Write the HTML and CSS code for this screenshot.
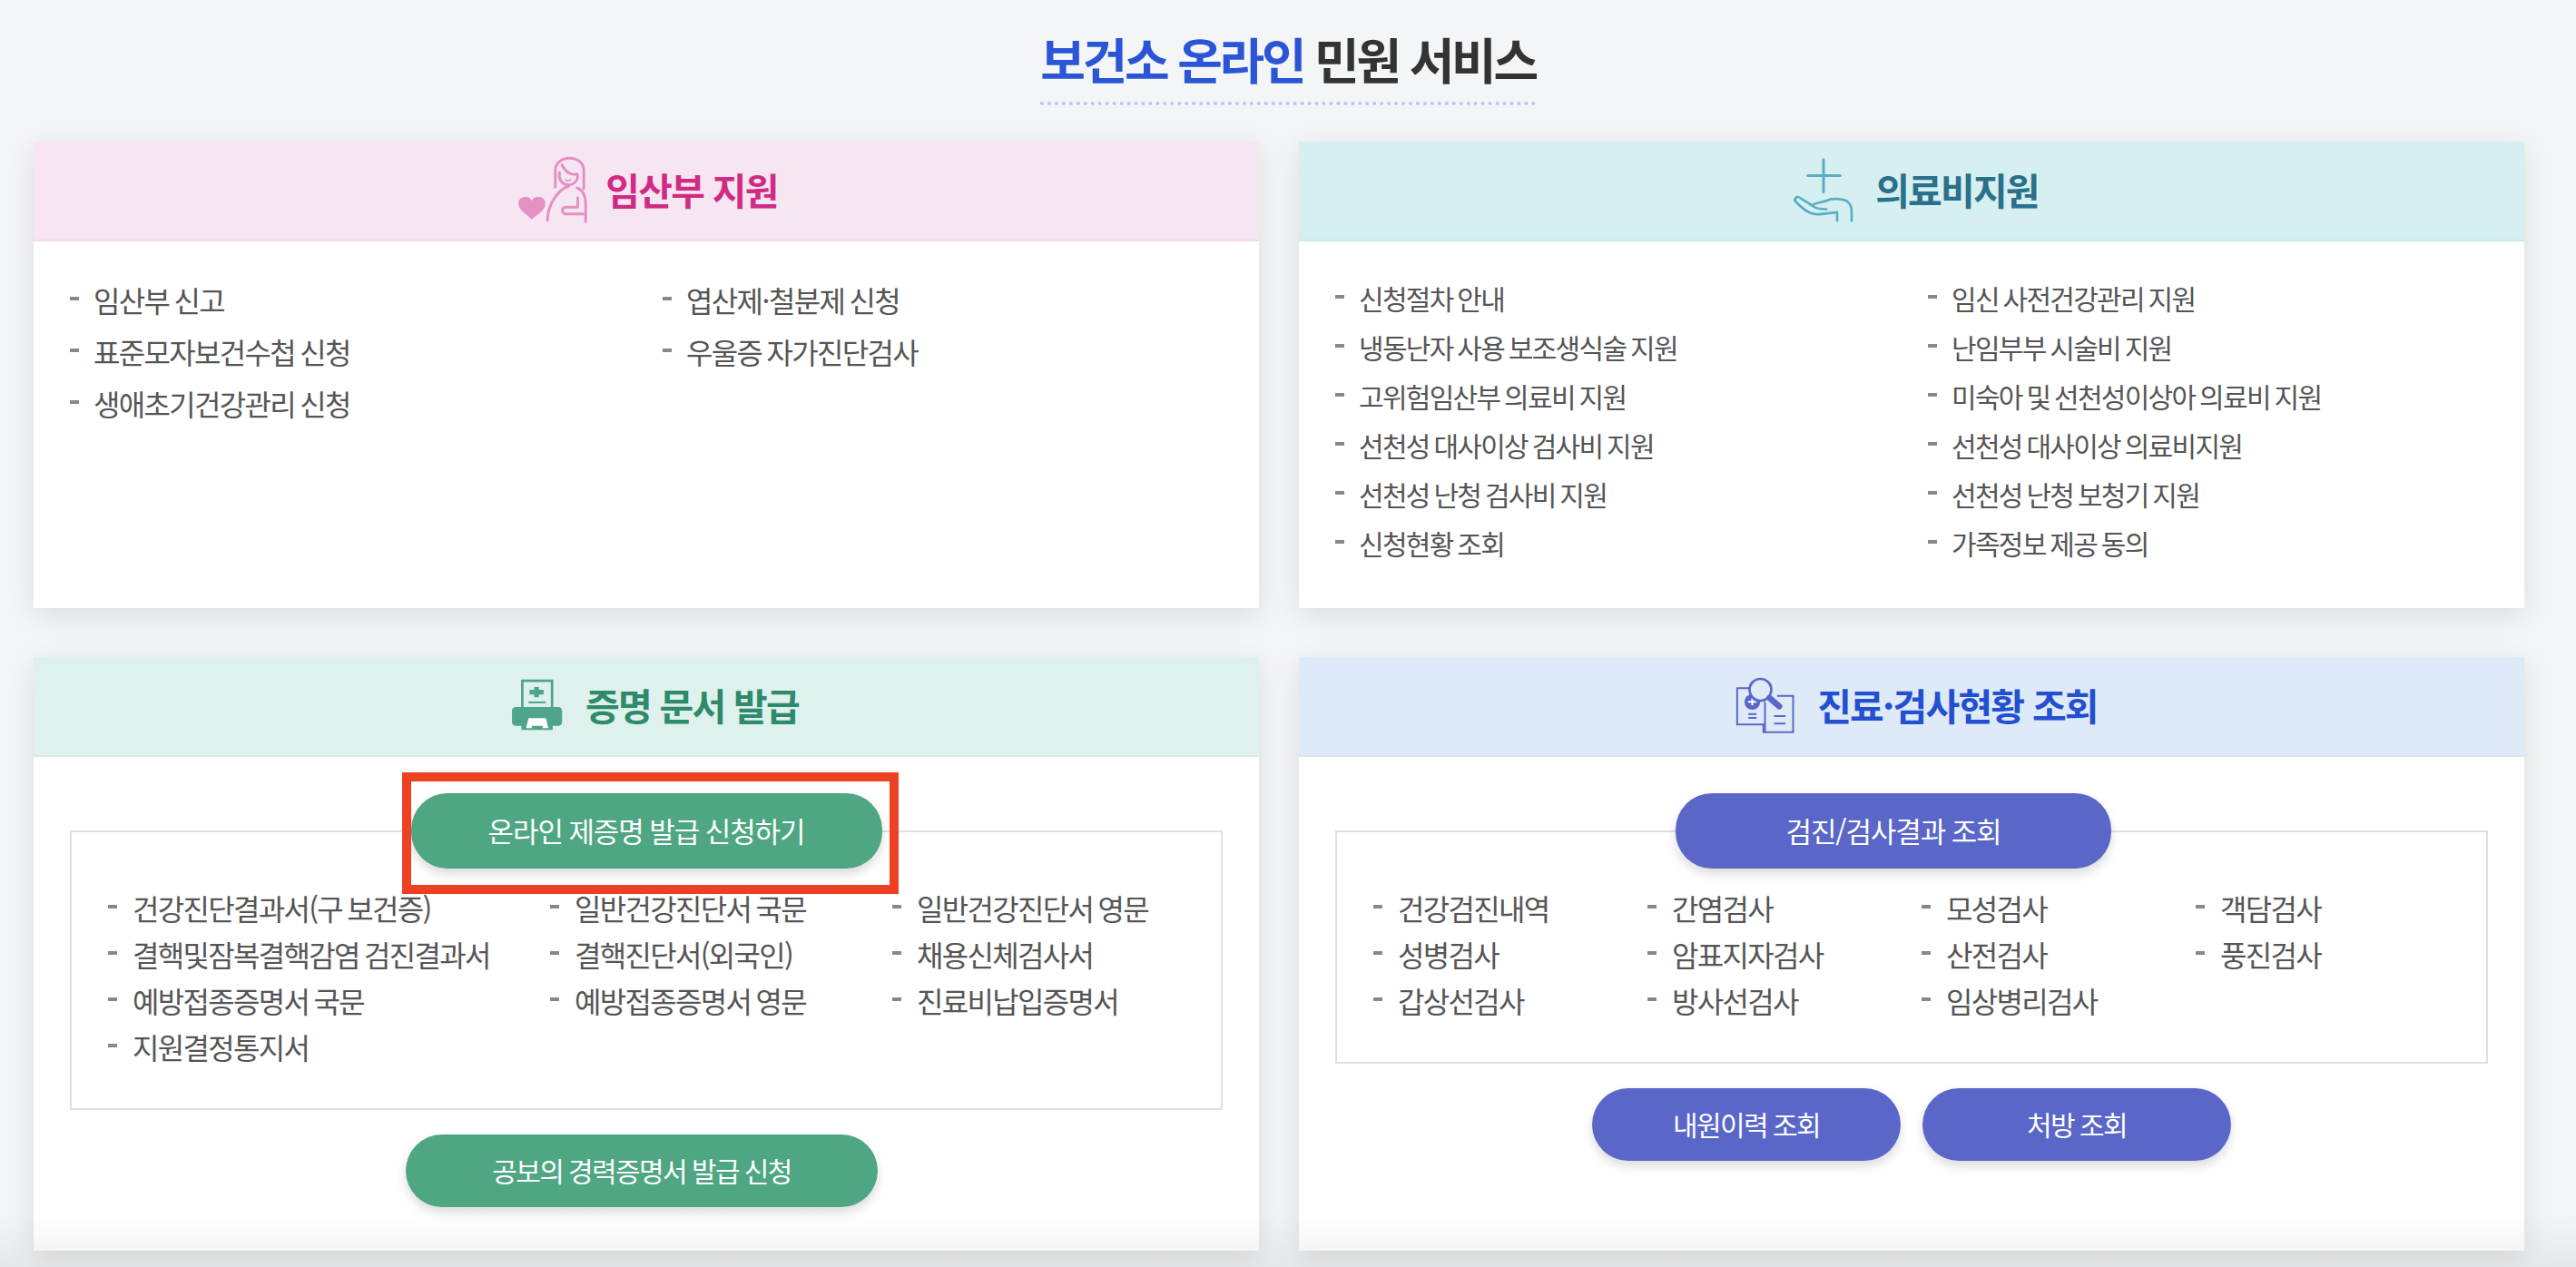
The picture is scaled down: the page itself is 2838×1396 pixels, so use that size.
FILE: index.html
```html
<!DOCTYPE html>
<html lang="ko">
<head>
<meta charset="utf-8">
<title>보건소 온라인 민원 서비스</title>
<link rel="stylesheet" href="styles.css">
</head>
<body>
<header class="page-head">
  <h1 class="page-title"><em>보건소 온라인</em> 민원 서비스</h1>
</header>
<main class="cards">
  <section class="card">
    <h2 class="card-head head-pink">
      <svg class="icon" width="82" height="75" viewBox="90 60 245 225" fill="none" stroke="#e58fc3" stroke-width="9" stroke-linecap="round" stroke-linejoin="round">
        <path d="M218 165V110C218 85 240 70 265 70C290 70 312 85 312 110V170"/>
        <path d="M232 118C228 140 240 158 262 158C285 158 296 135 290 122C270 128 250 115 240 92"/>
        <path d="M192 275C192 225 225 175 262 162M290 168C310 175 318 195 318 225V280"/>
        <path d="M292 200V232H252C238 232 238 254 252 254H310"/>
        <path d="M252 141C256 146 264 146 268 141" stroke-width="5"/>
        <path d="M140 272C115 250 96 238 96 220C96 205 108 198 120 198C130 198 136 203 140 210C144 203 150 198 162 198C175 198 185 206 185 220C185 240 165 252 140 272Z" fill="#e58fc3" stroke="none"/>
      </svg>
      <span>임산부 지원</span>
    </h2>
    <div class="card-body">
      <ul class="list list-two loose">
        <li>임산부 신고</li><li>엽산제&#8202;·&#8202;철분제 신청</li>
        <li>표준모자보건수첩 신청</li><li>우울증 자가진단검사</li>
        <li>생애초기건강관리 신청</li>
      </ul>
    </div>
  </section>
  <section class="card">
    <h2 class="card-head head-teal">
      <svg class="icon" width="70" height="72" viewBox="50 30 210 215" fill="none" stroke="#5aaec2" stroke-width="8" stroke-linecap="round" stroke-linejoin="round">
        <path d="M103 91H210M155 38V145" stroke-width="9"/>
        <path d="M118 190C130 178 150 182 170 172C190 165 225 168 235 178C250 190 248 205 248 240"/>
        <path d="M60 172C62 160 72 158 82 168L118 190C128 202 150 202 165 202"/>
        <path d="M60 172C66 182 90 205 110 214C135 225 160 215 200 212V240"/>
      </svg>
      <span>의료비지원</span>
    </h2>
    <div class="card-body body-dense">
      <ul class="list list-two dense">
        <li>신청절차 안내</li><li>임신 사전건강관리 지원</li>
        <li>냉동난자 사용 보조생식술 지원</li><li>난임부부 시술비 지원</li>
        <li>고위험임산부 의료비 지원</li><li>미숙아 및 선천성이상아 의료비 지원</li>
        <li>선천성 대사이상 검사비 지원</li><li>선천성 대사이상 의료비지원</li>
        <li>선천성 난청 검사비 지원</li><li>선천성 난청 보청기 지원</li>
        <li>신청현황 조회</li><li>가족정보 제공 동의</li>
      </ul>
    </div>
  </section>
  <section class="card">
    <h2 class="card-head head-green">
      <svg class="icon" width="60" height="58" viewBox="48 40 170 168">
        <rect x="85" y="46" width="95" height="90" fill="none" stroke="#4fa58a" stroke-width="8"/>
        <path d="M123 66H138V75H153V90H138V99H123V90H108V75H123Z" fill="#4fa58a"/>
        <path d="M105 115H160" stroke="#4fa58a" stroke-width="6"/>
        <rect x="52" y="130" width="160" height="60" rx="12" fill="#4fa58a"/>
        <rect x="82" y="188" width="100" height="15" fill="#4fa58a"/>
        <path d="M105 165H160L168 197H150V190H115V197H97Z" fill="#fff"/>
      </svg>
      <span>증명 문서 발급</span>
    </h2>
    <div class="card-body body-boxed">
      <div class="btn-row overlap"><a class="btn btn-green btn-primary-cert">온라인 제증명 발급 신청하기</a></div>
      <ul class="list box box-cert">
        <li>건강진단결과서(구 보건증)</li><li>일반건강진단서 국문</li><li>일반건강진단서 영문</li>
        <li>결핵및잠복결핵감염 검진결과서</li><li>결핵진단서(외국인)</li><li>채용신체검사서</li>
        <li>예방접종증명서 국문</li><li>예방접종증명서 영문</li><li>진료비납입증명서</li>
        <li>지원결정통지서</li>
      </ul>
      <div class="btn-row after shift-green"><a class="btn btn-green btn-sm btn-wide">공보의 경력증명서 발급 신청</a></div>
    </div>
  </section>
  <section class="card">
    <h2 class="card-head head-blue">
      <svg class="icon" width="67" height="64" viewBox="50 25 200 192" fill="none" stroke="#5a67c8" stroke-width="6">
        <path d="M100 65H58V185H150"/>
        <path d="M190 90H243V210H145V185"/>
        <path d="M150 110V210"/>
        <path d="M95 150H122M95 163H122M180 157H218M180 182H218"/>
        <circle cx="108" cy="110" r="26" fill="#5a67c8" stroke="none"/>
        <path d="M94 110H122M108 98V122" stroke="#fff" stroke-width="6"/>
        <circle cx="135" cy="70" r="36" fill="#dfeaf8" stroke-width="8"/>
        <path d="M165 97L197 125" stroke-width="20" stroke-linecap="round"/>
      </svg>
      <span>진료·검사현황 조회</span>
    </h2>
    <div class="card-body body-boxed">
      <div class="btn-row overlap shift-blue"><a class="btn btn-blue btn-result">검진/검사결과 조회</a></div>
      <ul class="list box box-exam">
        <li>건강검진내역</li><li>간염검사</li><li>모성검사</li><li>객담검사</li>
        <li>성병검사</li><li>암표지자검사</li><li>산전검사</li><li>풍진검사</li>
        <li>갑상선검사</li><li>방사선검사</li><li>임상병리검사</li>
      </ul>
      <div class="btn-row after gap"><a class="btn btn-blue btn-sm btn-small">내원이력 조회</a><a class="btn btn-blue btn-sm btn-small">처방 조회</a></div>
    </div>
  </section>
</main>
<div class="highlight" aria-hidden="true"></div>
</body>
</html>
```
FILE: styles.css
```css
* { box-sizing: border-box; }
html, body { margin: 0; height: 1396px; overflow: hidden; }
body {
  position: relative;
  background: #f4f5f7;
  font-family: "Noto Sans CJK KR", "Noto Sans", sans-serif;
  color: #555;
}
body::after {
  content: "";
  position: absolute;
  left: 0;
  right: 0;
  bottom: 0;
  height: 60px;
  pointer-events: none;
  background: linear-gradient(to bottom, rgba(0,0,0,0), rgba(0,0,0,.055));
  z-index: 3;
}
.page-head { height: 156px; text-align: center; padding-top: 32px; }
.page-title {
  display: inline-block;
  margin: 0;
  height: 84px;
  font-size: 54px;
  line-height: 66px;
  font-weight: 700;
  letter-spacing: -3.3px;
  color: #333;
  border-bottom: 4px dotted #b9c6ee;
}
.page-title em { font-style: normal; color: #2a55d4; }

.cards {
  display: grid;
  grid-template-columns: 1350px 1350px;
  grid-template-rows: 514px 654px;
  column-gap: 44px;
  row-gap: 54px;
  padding-left: 37px;
}
.card {
  display: flex;
  flex-direction: column;
  background: #fff;
  box-shadow: 0 8px 30px rgba(0,0,0,.1);
}
.card-head {
  display: flex;
  align-items: center;
  justify-content: center;
  height: 110px;
  margin: 0;
  padding-bottom: 3px;
  flex: none;
  font-size: 41px;
  font-weight: 700;
  letter-spacing: -1.8px;
  border-bottom: 2px solid;
}
.card-head span { margin-bottom: 2px; }
.head-pink { gap: 16px; padding-left: 2px; background: #f6e6f1; border-color: #f4d8e8; color: #d12a85; }
.head-teal { gap: 22px; padding-left: 8px; background: #d6eff1; border-color: #c8eaec; color: #2a7089; }
.head-green { gap: 23px; padding-left: 18px; background: #dff1ec; border-color: #d8ece6; color: #2f8a6c; }
.head-blue { gap: 24px; padding-left: 10px; background: #dfeaf8; border-color: #d8e4f5; color: #2350d0; }
.icon { flex: none; }

.card-body { flex: 1; padding: 37px 40px 0; }
.body-dense { padding-top: 35px; }
.body-boxed { padding-top: 40px; }
.list { list-style: none; margin: 0; padding: 0; font-size: 32px; letter-spacing: -1.7px; word-spacing: -2px; }
.list li { position: relative; height: 54px; line-height: 54px; padding-left: 26px; white-space: nowrap; }
.list li::before {
  content: "";
  position: absolute;
  left: 0;
  top: 24px;
  width: 10px;
  height: 4px;
  background: #888;
}
.list-two { display: grid; grid-template-columns: 653px 1fr; }
.list-two.loose { row-gap: 3px; }
.list-two.dense { font-size: 30px; }

.btn-row { display: flex; justify-content: center; position: relative; z-index: 1; }
.overlap { margin-bottom: -42px; }
.after { margin-top: 27px; }
.gap { gap: 24px; }
.shift-green { padding-right: 10px; }
.shift-blue { padding-right: 40px; }
.btn {
  display: flex;
  align-items: center;
  justify-content: center;
  height: 83px;
  padding-bottom: 2px;
  border-radius: 40px;
  color: #fff;
  font-size: 31px;
  letter-spacing: -1.1px;
  word-spacing: -1px;
  box-shadow: 0 6px 12px rgba(0,0,0,.14);
}
.btn-sm { height: 80px; font-size: 30px; letter-spacing: -1.6px; }
.btn-green { background: #4ea682; }
.btn-blue { background: #5a67c8; }
.btn-primary-cert { width: 519px; }
.btn-wide { width: 520px; }
.btn-result { width: 480px; }
.btn-small { width: 340px; }

.box {
  display: grid;
  width: 1270px;
  border: 2px solid #e0e0e0;
  padding: 58px 0 0 40px;
  align-content: start;
}
.box li { height: 51px; line-height: 51px; padding-left: 27px; }
.box li::before { top: 22px; }
.box-cert { grid-template-columns: 487px 377px 1fr; height: 308px; }
.box-exam { grid-template-columns: repeat(4, 302px); height: 257px; }

.highlight {
  position: absolute;
  left: 443px;
  top: 851px;
  width: 547px;
  height: 134px;
  border: 10px solid #ee4123;
  z-index: 2;
}
```
